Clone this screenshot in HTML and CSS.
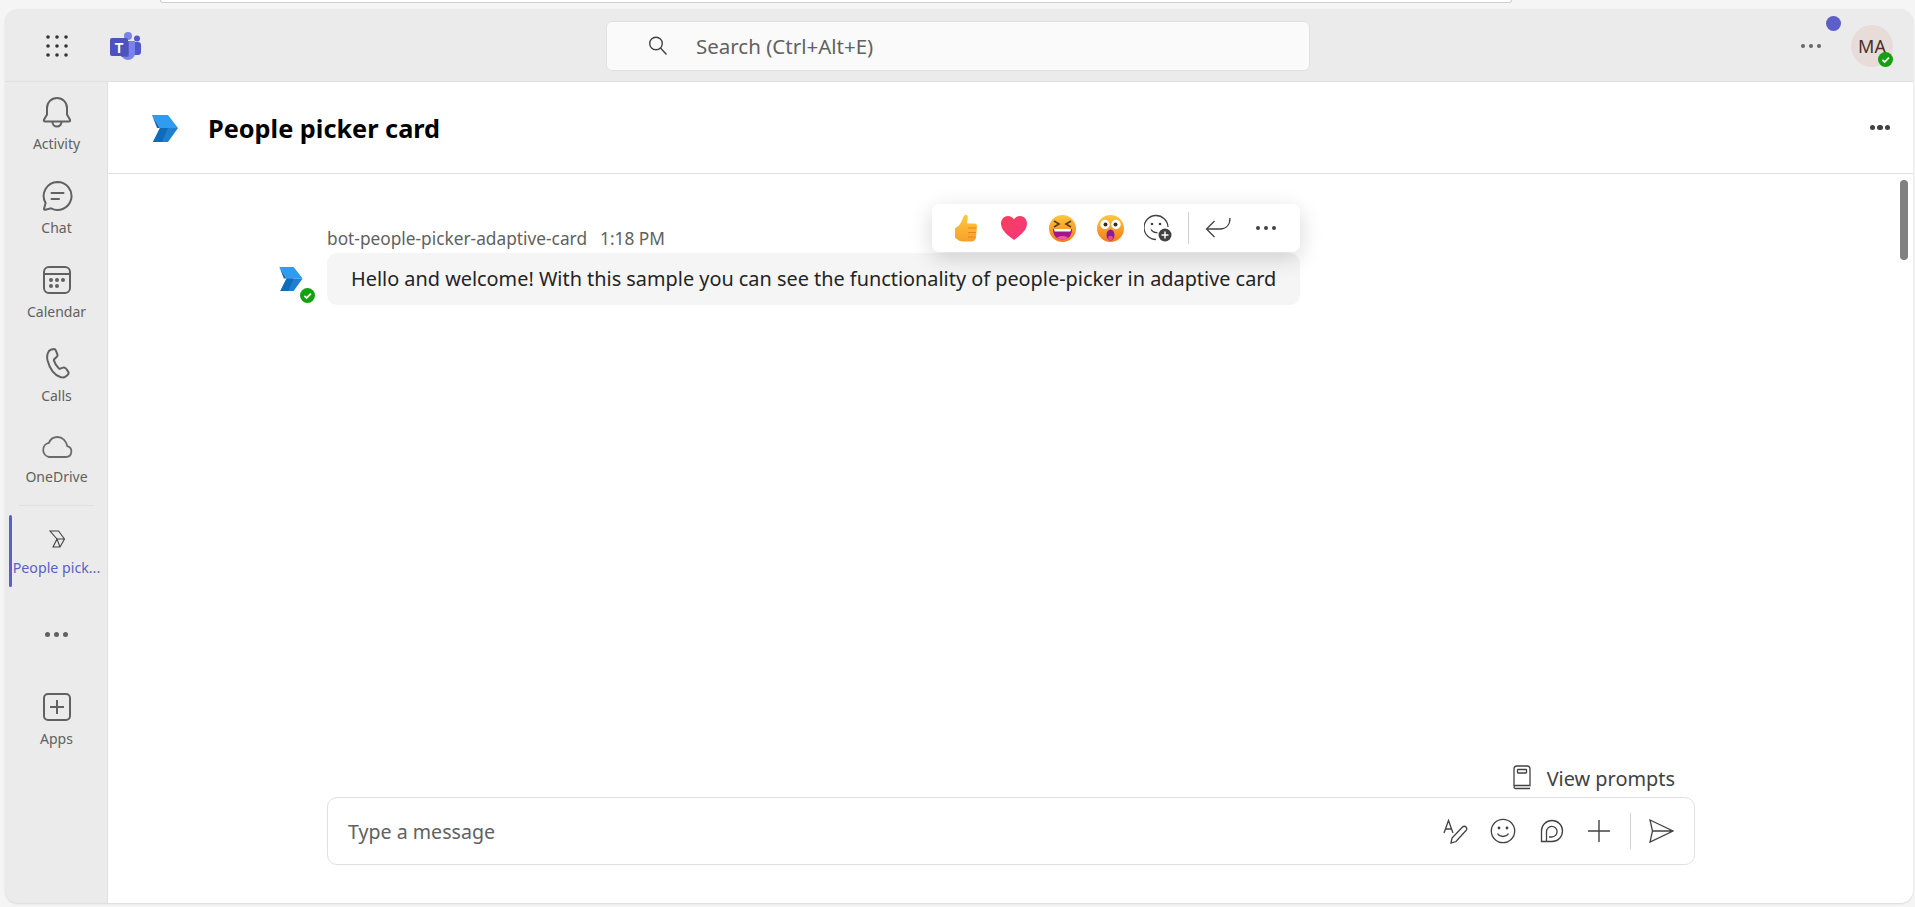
FILE: index.html
```html
<!DOCTYPE html>
<html lang="en">
<head>
  <meta charset="UTF-8">
  <meta name="viewport" content="width=device-width, initial-scale=1.0">
  <title>People picker card</title>
  <link rel="stylesheet" href="styles.css">
</head>
<body>
  <div class="browser-edge"></div>
  <div class="app">
    <header class="topbar">
      <div class="topbar-left">
        <button class="waffle" aria-label="Apps launcher">
          <svg width="22" height="22" viewBox="0 0 22 22" fill="#333"><circle cx="2" cy="2" r="1.8"/><circle cx="11" cy="2" r="1.8"/><circle cx="20" cy="2" r="1.8"/><circle cx="2" cy="11" r="1.8"/><circle cx="11" cy="11" r="1.8"/><circle cx="20" cy="11" r="1.8"/><circle cx="2" cy="20" r="1.8"/><circle cx="11" cy="20" r="1.8"/><circle cx="20" cy="20" r="1.8"/></svg>
        </button>
        <svg class="teams-logo" width="31" height="28" viewBox="0 0 31 28">
          <circle cx="27" cy="6.500" r="3" fill="#5059c9"/>
          <rect x="21" y="10" width="10" height="13" rx="3" fill="#5059c9"/>
          <circle cx="18" cy="4" r="4" fill="#7b83eb"/>
          <path d="M11 9h14v12a7 7 0 0 1-14 0z" fill="#7b83eb"/>
          <path d="M11 9h8v14a2 2 0 0 1-2 2h-6z" fill="#3f45a8" opacity=".55"/>
          <rect x="0" y="6" width="18" height="18" rx="2" fill="#4b53bc"/>
          <text x="9" y="20.500" class="teams-t">T</text>
        </svg>
      </div>
      <div class="search">
        <svg width="22" height="22" viewBox="0 0 22 22" fill="none" stroke="#424242" stroke-width="1.400"><circle cx="9" cy="8.500" r="6.300"/><path d="M13.500 13l6 6.500"/></svg>
        <span>Search (Ctrl+Alt+E)</span>
      </div>
      <div class="topbar-right">
        <span class="notify-dot"></span>
        <span class="dots-small dots-grey"><i></i><i></i><i></i></span>
        <div class="avatar">MA
          <span class="status status-avatar"><svg width="9" height="9" viewBox="0 0 10 10" fill="none" stroke="#fff" stroke-width="2"><path d="M1.500 5.500l2.500 2.300 4.800-5"/></svg></span>
        </div>
      </div>
    </header>

    <div class="main">
      <nav class="rail">
        <a class="rail-item">
          <svg width="32" height="32" viewBox="0 0 32 32" fill="none" stroke="#616161" stroke-width="2"><path d="M16 2c-5.600 0-10 4.300-10 10v6.500l-3 5.300c-.4.8.1 1.700 1 1.700h24c.9 0 1.400-.9 1-1.700l-3-5.300V12c0-5.700-4.400-10-10-10z"/><path d="M11.500 26a4.500 4.500 0 0 0 9 0"/></svg>
          <span>Activity</span>
        </a>
        <a class="rail-item">
          <svg width="32" height="32" viewBox="0 0 32 32" fill="none" stroke="#616161" stroke-width="2" stroke-linecap="round"><path d="M16.500 2a14 14 0 1 1-6.500 26.400l-5.700 1.400c-.8.200-1.400-.5-1.200-1.200l1.500-5.600A14 14 0 0 1 16.500 2z"/><path d="M10.500 13h12M10.500 19h7.500"/></svg>
          <span>Chat</span>
        </a>
        <a class="rail-item">
          <svg width="32" height="32" viewBox="0 0 32 32" fill="none" stroke="#616161" stroke-width="2"><rect x="3" y="3" width="26" height="26" rx="5"/><path d="M3 10h26"/><g fill="#616161" stroke="none"><circle cx="10" cy="16" r="2"/><circle cx="16" cy="16" r="2"/><circle cx="22" cy="16" r="2"/><circle cx="10" cy="22" r="2"/><circle cx="16" cy="22" r="2"/></g></svg>
          <span>Calendar</span>
        </a>
        <a class="rail-item">
          <svg width="32" height="32" viewBox="0 0 32 32" fill="none" stroke="#616161" stroke-width="2"><path d="M9.800 1.800l2-.6c1.300-.4 2.600.3 3.100 1.500l1.400 3.500c.4 1 .1 2.200-.7 2.900l-2.300 2c-.4.300-.5.800-.4 1.300.9 3 2.600 5.900 5 8 .4.300.9.400 1.300.2l2.800-1c1-.4 2.200 0 2.900.9l2.100 2.900c.8 1.100.6 2.600-.4 3.500l-1.600 1.400c-1.400 1.200-3.400 1.600-5.100.900C13.500 27.300 8.700 20.700 6.500 12.200 5.500 7.700 6.800 2.800 9.800 1.800z"/></svg>
          <span>Calls</span>
        </a>
        <a class="rail-item rail-item-short">
          <svg width="32" height="32" viewBox="0 0 32 32" fill="none" stroke="#6b6b6b" stroke-width="1.800"><path d="M8 26h17a5.500 5.500 0 0 0 1.300-10.800C25.300 10 21.400 6 16.500 6c-4 0-7.200 2.400-8.600 5.900A7.200 7.200 0 0 0 8 26z"/></svg>
          <span>OneDrive</span>
        </a>
        <div class="rail-divider"></div>
        <a class="rail-item rail-item-active">
          <svg width="20" height="20" viewBox="0 0 20 20" fill="none" stroke="#424242" stroke-width="1.100"><path d="M3 2h8.500L17.500 10l-4.500 8H6l4-8zM3 2L10 10h7.500M6 18l4-8 3 8"/></svg>
          <span>People pick...</span>
        </a>
        <div class="rail-more"><i></i><i></i><i></i></div>
        <a class="rail-item rail-item-apps">
          <svg width="32" height="32" viewBox="0 0 32 32" fill="none" stroke="#616161" stroke-width="2"><rect x="3" y="3" width="26" height="26" rx="4"/><path d="M16 9v14M9 16h14"/></svg>
          <span>Apps</span>
        </a>
      </nav>

      <main class="content">
        <div class="chat-header">
          <svg class="bot-logo" width="26" height="28" viewBox="0 0 26 28">
            <path d="M0 1h16l10 13H8z" fill="#2f9cf0"/>
            <path d="M0 1l8 13-3 0z" fill="#1666b4"/>
            <path d="M8 14h18L16 28H1z" fill="#1f7fd0"/>
            <path d="M8 14h8l-6 14H1z" fill="#0f6cbd"/>
          </svg>
          <h1>People picker card</h1>
          <span class="dots-big"><i></i><i></i><i></i></span>
        </div>
        <div class="chat-body">
          <div class="thumb"></div>
          <div class="message-row">
            <div class="msg-avatar">
              <svg width="24" height="25" viewBox="0 0 26 28">
                <path d="M0 1h16l10 13H8z" fill="#2f9cf0"/>
                <path d="M0 1l8 13-3 0z" fill="#1666b4"/>
                <path d="M8 14h18L16 28H1z" fill="#1f7fd0"/>
                <path d="M8 14h8l-6 14H1z" fill="#0f6cbd"/>
              </svg>
              <span class="status status-bot"><svg width="9" height="9" viewBox="0 0 10 10" fill="none" stroke="#fff" stroke-width="2"><path d="M1.500 5.500l2.500 2.300 4.800-5"/></svg></span>
            </div>
            <div class="message">
              <div class="msg-meta"><span>bot-people-picker-adaptive-card</span><span>1:18 PM</span></div>
              <div class="bubble">
                Hello and welcome! With this sample you can see the functionality of people-picker in adaptive card
                <div class="reactions">
                  <button class="react-btn">
                    <svg width="24" height="28" viewBox="0 0 24 28"><defs><linearGradient id="thumbFill" x1="0" y1="0" x2="0" y2="1"><stop offset="0" stop-color="#ffc83d"/><stop offset="1" stop-color="#f7a02c"/></linearGradient></defs><path d="M11 1c2-.6 3 1 2.800 3L13 9.500h7a3 3 0 0 1 3 3l-1 11c-.2 2.300-2 4-4.500 4H9c-3 0-5-1.200-6-2.500L1 24V14c2.500-1 5-3 6.500-6.500C9 4.500 9.500 1.500 11 1z" fill="url(#thumbFill)"/><path d="M14 14h8M14 18.500h8M14 23h7" stroke="#e8861a" stroke-width="1.200" fill="none"/></svg>
                  </button>
                  <button class="react-btn">
                    <svg width="28" height="26" viewBox="0 0 28 26"><defs><linearGradient id="heartFill" x1="0" y1="0" x2="1" y2="1"><stop offset="0" stop-color="#f9405a"/><stop offset="1" stop-color="#f2357f"/></linearGradient></defs><path d="M14 25C8 20.500 1 15.500 1 8.500 1 4 4.300 1 8 1c2.500 0 4.700 1.200 6 3.500C15.300 2.200 17.500 1 20 1c3.700 0 7 3 7 7.500C27 15.500 20 20.500 14 25z" fill="url(#heartFill)"/></svg>
                  </button>
                  <button class="react-btn">
                    <svg width="27" height="27" viewBox="0 0 27 27"><defs><linearGradient id="faceFill" x1="0" y1="0" x2="0" y2="1"><stop offset="0" stop-color="#fdc93a"/><stop offset="1" stop-color="#f4791f"/></linearGradient></defs><circle cx="13.500" cy="13.500" r="13.500" fill="url(#faceFill)"/><path d="M5 6l5 3-5 3M22 6l-5 3 5 3" fill="none" stroke="#5a3b1e" stroke-width="1.700"/><path d="M4 14h19c0 7-4 10.500-9.500 10.500S4 21 4 14z" fill="#a3148f"/><path d="M5 14h17l-.6 2.500H5.600z" fill="#fff"/><path d="M8 22.500c3-2 8-2 11 0-3 2.500-8 2.500-11 0z" fill="#ee5c9e"/></svg>
                  </button>
                  <button class="react-btn">
                    <svg width="27" height="27" viewBox="0 0 27 27"><circle cx="13.500" cy="13.500" r="13.500" fill="url(#faceFill)"/><circle cx="8" cy="9.500" r="4.700" fill="#fff"/><circle cx="19" cy="9.500" r="4.700" fill="#fff"/><circle cx="8.500" cy="9.500" r="2" fill="#3d2a1a"/><circle cx="18.500" cy="9.500" r="2" fill="#3d2a1a"/><ellipse cx="13.500" cy="20" rx="4" ry="5.500" fill="#8a1a9e"/><ellipse cx="13.500" cy="23" rx="2.500" ry="2.200" fill="#e84b95"/></svg>
                  </button>
                  <button class="react-btn">
                    <svg width="28" height="28" viewBox="0 0 28 28" fill="none" stroke="#424242" stroke-width="1.300"><path d="M12 25.500A12 12 0 1 1 24 13"/><path d="M7 15.500c1.500 2.500 4 3.500 6.500 3"/><circle cx="8" cy="10" r="1.300" fill="#424242" stroke="none"/><circle cx="16" cy="10" r="1.300" fill="#424242" stroke="none"/><circle cx="21" cy="21" r="6.500" fill="#424242" stroke="none"/><path d="M21 17.500v7M17.500 21h7" stroke="#fff" stroke-width="1.500"/></svg>
                  </button>
                  <span class="react-sep"></span>
                  <button class="react-btn">
                    <svg width="26" height="24" viewBox="0 0 26 24" fill="none" stroke="#424242" stroke-width="1.300"><path d="M25 2c0 7-4 11-10 11H2"/><path d="M9.500 5L1.500 13l8 8"/></svg>
                  </button>
                  <button class="react-btn"><span class="dots-small"><i></i><i></i><i></i></span></button>
                </div>
              </div>
            </div>
          </div>

          <div class="spacer"></div>

          <div class="prompts">
            <svg width="20" height="25" viewBox="0 0 20 25" fill="none" stroke="#424242" stroke-width="1.300"><path d="M2 21V4a3 3 0 0 1 3-3h10a3 3 0 0 1 3 3v16.500H3.500A1.500 1.500 0 0 0 2 22c0 1 .7 1.500 1.500 1.500H18"/><rect x="5.500" y="4.500" width="9" height="3.500" rx=".5"/></svg>
            <span>View prompts</span>
          </div>
          <div class="compose">
            <span class="compose-hint">Type a message</span>
            <div class="compose-tools">
              <svg width="26" height="26" viewBox="0 0 26 26" fill="none" stroke="#424242" stroke-width="1.300"><path d="M2 15L6.500 2.500 11 15M3.500 11h6"/><path d="M9 25l1-5L20.500 9c1-1 2.600-1 3.500 0s1 2.500 0 3.500L14 23.500z"/></svg>
              <svg width="26" height="26" viewBox="0 0 26 26" fill="none" stroke="#424242" stroke-width="1.300"><circle cx="13" cy="13" r="11.700"/><path d="M7.500 15.500c2.500 4 8.500 4 11 0"/><circle cx="9" cy="10" r="1.400" fill="#424242" stroke="none"/><circle cx="17" cy="10" r="1.400" fill="#424242" stroke="none"/></svg>
              <svg width="26" height="26" viewBox="0 0 26 26" fill="none" stroke="#424242" stroke-width="1.300"><path d="M14 2.500a10.500 10.500 0 1 1 0 21H3.500V13A10.500 10.500 0 0 1 14 2.500z"/><path d="M8.500 23.500v-9.500a5.300 5.300 0 1 1 5.300 5H11"/></svg>
              <svg width="26" height="26" viewBox="0 0 26 26" fill="none" stroke="#424242" stroke-width="1.400"><path d="M13 2v22M2 13h22"/></svg>
              <span class="compose-sep"></span>
              <svg width="26" height="26" viewBox="0 0 26 26" fill="none" stroke="#424242" stroke-width="1.300"><path d="M2 2l23 11L2 24l2.500-11zM4.500 13H25"/></svg>
            </div>
          </div>
        </div>
      </main>
    </div>
  </div>
</body>
</html>
```

FILE: styles.css
```css
* {
  box-sizing: border-box;
}
html, body {
  height: 100%;
  margin: 0;
  overflow: hidden;
}
body {
  font-family: "Noto Sans", "Open Sans", sans-serif;
  background-color: #f5f5f5;
  color: #242424;
}
button {
  border: none;
  background: none;
  padding: 0;
  display: flex;
  align-items: center;
  justify-content: center;
}
.browser-edge {
  height: 3px;
  margin: 0 403px 0 160px;
  border: 1px solid #cfcfcf;
  border-top: none;
  border-radius: 0 0 14px 14px;
  background-color: #fff;
}
.app {
  display: flex;
  flex-direction: column;
  height: 894px;
  margin: 6px 2px 0 5px;
  border-radius: 13px;
  overflow: hidden;
  background-color: #ebebeb;
  box-shadow: 0 1px 2px rgba(0, 0, 0, 0.12);
}

/* top bar */
.topbar {
  display: flex;
  align-items: center;
  flex: none;
  height: 73px;
  padding-top: 2px;
  border-bottom: 1px solid #e0e0e0;
}
.topbar-left {
  display: flex;
  align-items: center;
  flex: none;
  width: 601px;
}
.waffle {
  width: 104px;
  height: 40px;
}
.teams-logo {
  margin-left: 1px;
}
.teams-t {
  font-family: "Liberation Sans", sans-serif;
  font-size: 14px;
  font-weight: bold;
  fill: #fff;
  text-anchor: middle;
}
.search {
  display: flex;
  align-items: center;
  gap: 27px;
  flex: none;
  width: 704px;
  height: 50px;
  padding-left: 40px;
  border: 1px solid #e0e0e0;
  border-radius: 6px;
  background-color: #fafafa;
  color: #616161;
  font-size: 20.500px;
}
.topbar-right {
  display: flex;
  align-items: center;
  justify-content: flex-end;
  flex: 1;
  position: relative;
  padding-right: 20px;
}
.notify-dot {
  position: absolute;
  right: 72px;
  top: -9px;
  width: 15px;
  height: 15px;
  border-radius: 50%;
  background-color: #5b5fc7;
}
.dots-small {
  display: flex;
  gap: 4px;
}
.dots-small i {
  width: 4px;
  height: 4px;
  border-radius: 50%;
  background-color: #424242;
}
.dots-grey i {
  background-color: #666;
}
.topbar-right .dots-small {
  margin-right: 30px;
}
.avatar {
  position: relative;
  width: 42px;
  height: 42px;
  border-radius: 50%;
  background-color: #e8dcd8;
  color: #4a3028;
  font-size: 18px;
  line-height: 42px;
  text-align: center;
}
.status {
  position: absolute;
  display: flex;
  align-items: center;
  justify-content: center;
  width: 15px;
  height: 15px;
  border-radius: 50%;
  background-color: #13a10e;
}
.status-avatar {
  right: 0;
  bottom: 0;
}

/* left rail */
.main {
  display: flex;
  flex: 1;
  min-height: 0;
}
.rail {
  flex: none;
  width: 103px;
  padding-left: 1px;
  border-right: 1px solid #e0e0e0;
}
.rail-item {
  position: relative;
  display: flex;
  flex-direction: column;
  align-items: center;
  height: 84px;
  padding-top: 14px;
  color: #616161;
  font-size: 14px;
  line-height: 31px;
}
.rail-item-short {
  height: 81px;
  padding-top: 13px;
}
.rail-item-short span {
  line-height: 28px;
}
.rail-divider {
  height: 1px;
  margin: 6px 13px 9px;
  background-color: #e0e0e0;
}
.rail-item-active {
  height: 72px;
  padding-top: 14px;
  color: #5b5fc7;
  font-size: 14.200px;
  white-space: nowrap;
}
.rail-item-active span {
  line-height: 37px;
}
.rail-item-active::before {
  content: "";
  position: absolute;
  left: 3px;
  top: 0;
  bottom: 0;
  width: 3px;
  border-radius: 2px;
  background-color: #5b5fc7;
}
.rail-more {
  display: flex;
  align-items: center;
  justify-content: center;
  gap: 4px;
  height: 94px;
}
.rail-more i {
  width: 5px;
  height: 5px;
  border-radius: 50%;
  background-color: #616161;
}
.rail-item-apps {
  padding-top: 10px;
  height: 80px;
}
.rail-item-apps span {
  line-height: 31px;
}

/* chat pane */
.content {
  display: flex;
  flex-direction: column;
  flex: 1;
  min-width: 0;
  background-color: #fff;
}
.chat-header {
  display: flex;
  align-items: center;
  flex: none;
  height: 92px;
  padding: 0 23px 0 44px;
  border-bottom: 1px solid #e0e0e0;
}
.bot-logo {
  margin-right: 30px;
}
.chat-header h1 {
  flex: 1;
  margin: 0;
  color: #000;
  font-size: 25.300px;
  font-weight: 700;
}
.dots-big {
  display: flex;
  gap: 2px;
}
.dots-big i {
  width: 5.500px;
  height: 5.500px;
  border-radius: 50%;
  background-color: #424242;
}
.chat-body {
  position: relative;
  display: flex;
  flex-direction: column;
  flex: 1;
  min-height: 0;
  padding: 0 0 38px 171px;
}
.thumb {
  position: absolute;
  right: 5px;
  top: 6px;
  width: 8px;
  height: 80px;
  border-radius: 4px;
  background-color: #808080;
}
.message-row {
  display: flex;
  margin-top: 52px;
}
.msg-avatar {
  position: relative;
  flex: none;
  width: 48px;
  padding-top: 40px;
}
.status-bot {
  left: 21px;
  top: 62px;
}
.message {
  flex: none;
  width: 973px;
}
.msg-meta {
  display: flex;
  gap: 13px;
  height: 27px;
  color: #616161;
  font-size: 17.300px;
  line-height: 25px;
}
.bubble {
  position: relative;
  height: 52px;
  padding: 0 24px;
  border-radius: 10px;
  background-color: #f5f5f5;
  color: #242424;
  font-size: 19.870px;
  line-height: 51px;
  white-space: nowrap;
}
.reactions {
  position: absolute;
  right: 0;
  bottom: 53px;
  display: flex;
  align-items: center;
  height: 48px;
  padding: 0 10px;
  border-radius: 7px;
  background-color: #fff;
  box-shadow: 0 6px 22px rgba(0, 0, 0, 0.16);
}
.react-btn {
  width: 48px;
  height: 48px;
}
.react-sep {
  width: 1px;
  height: 32px;
  margin: 0 5px 0 6px;
  background-color: #d1d1d1;
}
.spacer {
  flex: 1;
}
.prompts {
  display: flex;
  align-items: center;
  justify-content: flex-end;
  gap: 15px;
  width: 1368px;
  height: 32px;
  margin: 0 0 3px 48px;
  padding-right: 20px;
  color: #424242;
  font-size: 19.900px;
}
.prompts svg {
  margin-top: -1px;
}
.compose {
  display: flex;
  align-items: center;
  width: 1368px;
  margin-left: 48px;
  height: 68px;
  padding: 0 20px;
  border: 1px solid #e0e0e0;
  border-radius: 10px;
  color: #616161;
  font-size: 19.600px;
}
.compose-hint {
  flex: 1;
}
.compose-tools {
  display: flex;
  align-items: center;
  gap: 22px;
}
.compose-sep {
  width: 1px;
  height: 36px;
  margin: 0 -5px 0 -4px;
  background-color: #d1d1d1;
}
```
